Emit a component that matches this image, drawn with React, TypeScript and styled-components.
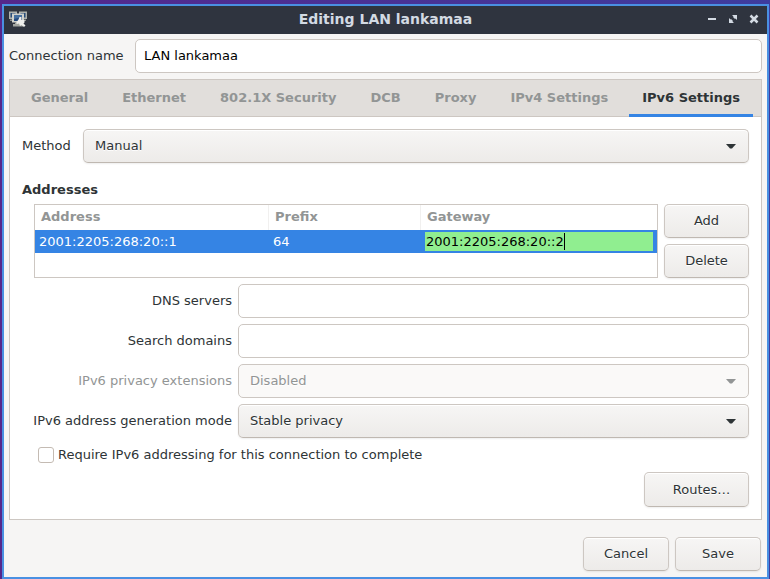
import React from "react";
import styled, { createGlobalStyle, css } from "styled-components";

const GlobalStyle = createGlobalStyle`
  * { box-sizing: border-box; }
  body { margin: 0; }
  body, button, input, select, table {
    font-family: "DejaVu Sans", Verdana, sans-serif;
    font-size: 13px;
    line-height: 16px;
    color: #2e3436;
  }
`;

const Desktop = styled.div`
  display: flex;
  min-height: 100vh;
  padding: 4px 1px 0 2px;
  background: linear-gradient(90deg, #55278b, #3e3c9e);
`;

const Window = styled.main`
  flex: 1;
  display: flex;
  flex-direction: column;
  min-width: 0;
  border: 2px solid #4a90e2;
  background: #f6f5f4;
`;

const TitleBar = styled.header`
  display: grid;
  grid-template-columns: 60px 1fr 60px;
  align-items: center;
  height: 28px;
  padding: 0 5px 2px;
  background: #2f343f;
`;

const Title = styled.h1`
  margin: 0;
  color: #d3dae3;
  font-size: 14px;
  line-height: 20px;
  font-weight: bold;
  text-align: center;
  white-space: nowrap;
`;

const WindowControls = styled.div`
  display: flex;
  justify-content: flex-end;
  gap: 5px;
`;

const ControlButton = styled.button`
  display: flex;
  width: 16px;
  height: 16px;
  padding: 0;
  border: 0;
  background: none;
  color: #d3dae3;
`;

const Content = styled.form`
  flex: 1;
  display: flex;
  flex-direction: column;
  padding: 5px 5px 6px;
`;

const NameRow = styled.div`
  display: grid;
  grid-template-columns: 114px 1fr;
  gap: 12px;
  align-items: center;
`;

const FieldLabel = styled.label<{ $dim?: boolean }>`
  color: ${(p) => (p.$dim ? "#929595" : "#2e3436")};
  white-space: nowrap;
`;

const TextField = styled.input`
  width: 100%;
  height: 34px;
  padding: 0 8px 2px;
  border: 1px solid #cdc7c2;
  border-radius: 5px;
  background: #fff;
  color: #000;
  outline: none;
`;

const Notebook = styled.section`
  flex: 1;
  display: flex;
  flex-direction: column;
  margin-top: 6px;
  border: 1px solid #cdc7c2;
  background: #fff;
`;

const TabBar = styled.div`
  display: flex;
  gap: 8px;
  height: 37px;
  padding: 0 8px;
  border-bottom: 1px solid #cdc7c2;
  background: #e1dedb;
`;

const Tab = styled.button`
  flex: 1 1 auto;
  height: 37px;
  padding: 0 12px 2px;
  border: 0;
  background: none;
  color: #929595;
  font-weight: bold;
  white-space: nowrap;
  &[aria-selected="true"] {
    color: #2e3436;
    box-shadow: inset 0 -3px #3584e4;
  }
`;

const Panel = styled.div`
  display: flex;
  flex-direction: column;
  padding: 12px;
`;

const MethodRow = styled.div`
  display: grid;
  grid-template-columns: 49px 1fr;
  gap: 12px;
  align-items: center;
`;

const raised = css`
  border: 1px solid #cdc7c2;
  border-bottom-color: #bfb8b1;
  border-radius: 5px;
  background: linear-gradient(#f6f5f4 2px, #edebe9);
  box-shadow: inset 0 1px #fff, 0 1px 2px rgba(0, 0, 0, 0.07);
  text-shadow: 0 1px #fff;
`;

const SelectWrap = styled.div`
  display: grid;
  align-items: center;
  > * { grid-area: 1 / 1; }
  > svg {
    justify-self: end;
    margin-right: 13px;
    pointer-events: none;
  }
`;

const SelectBox = styled.select`
  ${raised}
  appearance: none;
  width: 100%;
  height: 34px;
  padding: 0 32px 0 11px;
  &:disabled {
    border-color: #cdc7c2;
    background: #faf9f8;
    box-shadow: none;
    color: #929595;
    opacity: 1;
  }
`;

const Button = styled.button<{ $wide?: boolean }>`
  ${raised}
  min-width: ${(p) => (p.$wide ? "86px" : "85px")};
  height: 34px;
  padding: 0 16px;
`;

const RoutesButton = styled(Button)`
  align-self: flex-end;
  width: 105px;
  height: 35px;
  margin-top: 9px;
  padding: 0 12px 0 22px;
`;

const SectionTitle = styled.h2`
  margin: 19px 0 6px;
  font-size: 13px;
  line-height: 16px;
`;

const AddressArea = styled.div`
  display: grid;
  grid-template-columns: 1fr 85px;
  gap: 6px;
  padding-left: 12px;
`;

const ButtonStack = styled.div`
  display: grid;
  gap: 6px;
`;

const TableFrame = styled.div`
  height: 74px;
  border: 1px solid #cdc7c2;
  background: #fff;
`;

const AddressTable = styled.table`
  width: 100%;
  border-collapse: separate;
  border-spacing: 0;
  table-layout: fixed;
`;

const HeadCell = styled.th<{ $width?: number }>`
  width: ${(p) => (p.$width ? `${p.$width}px` : "auto")};
  height: 25px;
  padding: 0 6px 2px;
  border-right: 1px solid #f1f0ef;
  color: #929595;
  text-align: left;
  &:last-child { border-right: 0; }
`;

const Cell = styled.td`
  height: 23px;
  padding: 0 4px;
  background: #3584e4;
  color: #fff;
`;

const EditField = styled.label`
  display: flex;
  align-items: center;
  height: 19px;
  padding-left: 1px;
  background: #90ee90;
`;

const EditInput = styled.input`
  field-sizing: content;
  height: 19px;
  padding: 0;
  border: 0;
  background: none;
  color: #000;
  outline: none;
`;

const Caret = styled.span`
  width: 1px;
  height: 17px;
  background: #000;
`;

const FormGrid = styled.div`
  display: grid;
  grid-template-columns: 198px 1fr;
  gap: 6px;
  align-items: center;
  margin-top: 6px;
  padding-left: 12px;
  > label {
    justify-self: end;
  }
`;

const CheckRow = styled.label`
  display: flex;
  align-items: center;
  gap: 4px;
  margin-top: 9px;
  padding-left: 16px;
`;

const CheckBox = styled.input`
  appearance: none;
  width: 16px;
  height: 16px;
  margin: 0;
  border: 1px solid #c4bbb3;
  border-radius: 3px;
  background: #fff;
`;

const Actions = styled.footer`
  display: flex;
  justify-content: flex-end;
  gap: 6px;
  margin-top: 17px;
  padding-right: 1px;
`;

const NetworkIcon = () => (
  <svg width="18" height="16" viewBox="0 0 18 16" aria-hidden="true">
    <path d="M0 .5h8v7.5H0zM10 .5h8v7.5h-8z" fill="#aeb1ad" />
    <path d="M1.5 2h5v4.5h-5zM11.500 2h5v4.500h-5z" fill="#294d7a" />
    <path d="M1 8.500h4V10H1zM13 8.500h4V10h-4z" fill="#8f928f" />
    <path d="M3 2.500h12v9H3z" fill="#d0d1cc" />
    <path d="M5 4h8v6H5z" fill="#24497d" />
    <path d="M5 4h8v2L5 8z" fill="#466f9f" />
    <path d="M6 11.500h6V13h2v2.500H4V13h2z" fill="#a4a6a1" />
    <path d="M10.500 6h2v3h3v2.500l-1 1 2 2L15 16l-2.500-2-1.500 1-1-2.500-2 .5-1-1 2.500-3.500z" fill="#eeeeec" />
  </svg>
);

const Arrow = ({ dim = false }: { dim?: boolean }) => (
  <svg width="10" height="5" viewBox="0 0 10 5" aria-hidden="true">
    <path d="M0 0h10L6 4.5H4z" fill={dim ? "#929595" : "#2e3436"} />
  </svg>
);

type SelectProps = { id: string; value: string; disabled?: boolean };

const Select = ({ id, value, disabled }: SelectProps) => (
  <SelectWrap>
    <SelectBox id={id} defaultValue={value} disabled={disabled}>
      <option>{value}</option>
    </SelectBox>
    <Arrow dim={disabled} />
  </SelectWrap>
);

const TABS = ["General", "Ethernet", "802.1X Security", "DCB", "Proxy", "IPv4 Settings", "IPv6 Settings"];

export default function App() {
  return (
    <>
      <GlobalStyle />
      <Desktop>
        <Window>
          <TitleBar>
            <NetworkIcon />
            <Title>Editing LAN lankamaa</Title>
            <WindowControls>
              <ControlButton type="button" aria-label="Minimize">
                <svg width="16" height="16" viewBox="0 0 16 16">
                  <path d="M4 7h8v2H4z" fill="currentColor" />
                </svg>
              </ControlButton>
              <ControlButton type="button" aria-label="Maximize">
                <svg width="16" height="16" viewBox="0 0 16 16">
                  <path d="M7 4h5v5l-1.500-1.500L10 8 8 6l.5-.5zM4 7l1.500 1.500L6 8l2 2-.5.5L9 12H4z" fill="currentColor" />
                </svg>
              </ControlButton>
              <ControlButton type="button" aria-label="Close">
                <svg width="16" height="16" viewBox="0 0 16 16">
                  <path d="M4.500 4.500l7 7M11.500 4.500l-7 7" stroke="currentColor" strokeWidth="2.500" />
                </svg>
              </ControlButton>
            </WindowControls>
          </TitleBar>
          <Content onSubmit={(e) => e.preventDefault()}>
            <NameRow>
              <FieldLabel htmlFor="name">Connection name</FieldLabel>
              <TextField id="name" defaultValue="LAN lankamaa" />
            </NameRow>
            <Notebook>
              <TabBar role="tablist">
                {TABS.map((tab) => (
                  <Tab key={tab} type="button" role="tab" aria-selected={tab === "IPv6 Settings"}>
                    {tab}
                  </Tab>
                ))}
              </TabBar>
              <Panel role="tabpanel">
                <MethodRow>
                  <FieldLabel htmlFor="method">Method</FieldLabel>
                  <Select id="method" value="Manual" />
                </MethodRow>
                <SectionTitle>Addresses</SectionTitle>
                <AddressArea>
                  <TableFrame>
                    <AddressTable>
                      <thead>
                        <tr>
                          <HeadCell $width={234}>Address</HeadCell>
                          <HeadCell $width={152}>Prefix</HeadCell>
                          <HeadCell>Gateway</HeadCell>
                        </tr>
                      </thead>
                      <tbody>
                        <tr>
                          <Cell>2001:2205:268:20::1</Cell>
                          <Cell>64</Cell>
                          <Cell>
                            <EditField>
                              <EditInput aria-label="Gateway" defaultValue="2001:2205:268:20::2" />
                              <Caret />
                            </EditField>
                          </Cell>
                        </tr>
                      </tbody>
                    </AddressTable>
                  </TableFrame>
                  <ButtonStack>
                    <Button type="button">Add</Button>
                    <Button type="button">Delete</Button>
                  </ButtonStack>
                </AddressArea>
                <FormGrid>
                  <FieldLabel htmlFor="dns">DNS servers</FieldLabel>
                  <TextField id="dns" />
                  <FieldLabel htmlFor="domains">Search domains</FieldLabel>
                  <TextField id="domains" />
                  <FieldLabel htmlFor="privacy" $dim>IPv6 privacy extensions</FieldLabel>
                  <Select id="privacy" value="Disabled" disabled />
                  <FieldLabel htmlFor="mode">IPv6 address generation mode</FieldLabel>
                  <Select id="mode" value="Stable privacy" />
                </FormGrid>
                <CheckRow>
                  <CheckBox type="checkbox" />
                  Require IPv6 addressing for this connection to complete
                </CheckRow>
                <RoutesButton type="button">Routes…</RoutesButton>
              </Panel>
            </Notebook>
            <Actions>
              <Button type="button" $wide>Cancel</Button>
              <Button type="submit" $wide>Save</Button>
            </Actions>
          </Content>
        </Window>
      </Desktop>
    </>
  );
}
